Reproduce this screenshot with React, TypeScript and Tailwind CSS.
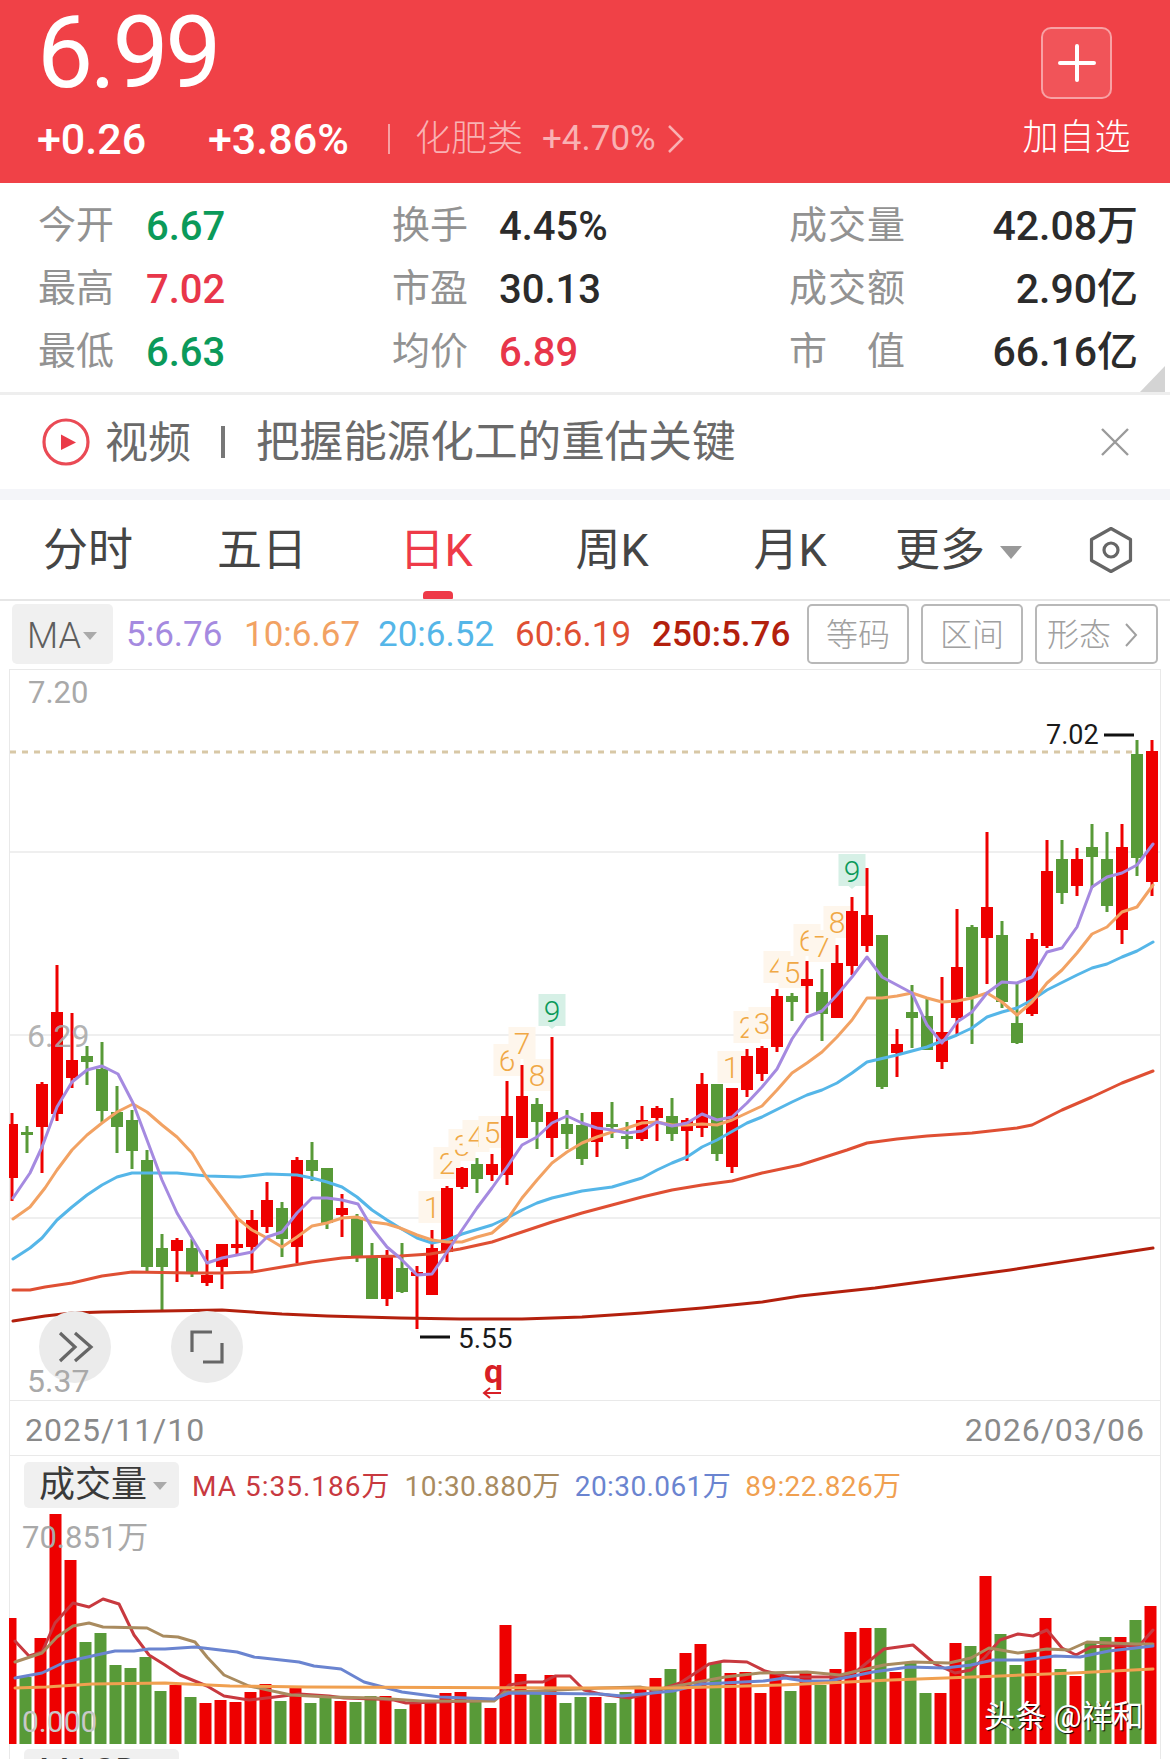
import React from "react";

type C = [number, number, number, number, "r" | "g"];
const candles: C[] = [
  [1113,1124,1178,1201,"r"],[1126,1132,1135,1153,"g"],[1082,1084,1127,1173,"r"],[965,1012,1114,1121,"r"],[1013,1060,1078,1088,"r"],
  [1046,1056,1062,1085,"g"],[1042,1069,1111,1122,"g"],[1086,1112,1127,1153,"g"],[1110,1120,1151,1169,"g"],[1150,1160,1267,1271,"g"],
  [1234,1248,1267,1310,"g"],[1238,1240,1251,1282,"r"],[1239,1248,1272,1277,"g"],[1250,1275,1283,1286,"r"],[1244,1244,1267,1289,"r"],
  [1219,1244,1248,1255,"r"],[1210,1220,1247,1273,"r"],[1182,1200,1227,1233,"r"],[1202,1208,1239,1257,"g"],[1157,1160,1247,1263,"r"],
  [1142,1160,1171,1181,"g"],[1168,1168,1223,1229,"g"],[1194,1208,1215,1237,"r"],[1214,1217,1257,1262,"g"],[1243,1257,1299,1299,"g"],
  [1250,1256,1299,1306,"r"],[1243,1268,1292,1293,"g"],[1266,1272,1276,1329,"r"],[1230,1248,1295,1295,"r"],[1186,1188,1252,1262,"r"],
  [1167,1168,1187,1189,"r"],[1158,1164,1179,1193,"g"],[1154,1164,1175,1181,"r"],[1081,1116,1175,1185,"r"],[1065,1096,1138,1138,"r"],
  [1098,1104,1122,1149,"g"],[1037,1112,1138,1157,"r"],[1110,1124,1134,1149,"g"],[1113,1125,1159,1165,"g"],[1112,1112,1142,1157,"r"],
  [1102,1124,1127,1138,"g"],[1122,1136,1139,1149,"g"],[1106,1120,1139,1141,"r"],[1106,1108,1118,1141,"r"],[1098,1116,1134,1141,"g"],
  [1118,1120,1131,1161,"r"],[1073,1084,1128,1137,"r"],[1084,1084,1154,1161,"g"],[1088,1088,1167,1173,"r"],[1049,1056,1090,1097,"r"],
  [1046,1048,1074,1081,"r"],[989,996,1047,1052,"r"],[993,996,1002,1021,"g"],[961,979,986,1013,"r"],[969,992,1014,1041,"g"],
  [945,963,1018,1018,"r"],[897,911,966,975,"r"],[868,915,946,952,"r"],[935,935,1087,1089,"g"],[1029,1044,1053,1077,"r"],
  [985,1012,1018,1048,"g"],[998,1016,1050,1050,"g"],[977,1032,1062,1069,"r"],[909,967,1018,1036,"r"],[925,927,997,1044,"g"],
  [832,907,938,984,"r"],[921,935,1002,1008,"g"],[983,1023,1043,1044,"g"],[933,939,1014,1016,"r"],[840,871,946,948,"r"],
  [840,859,893,904,"g"],[848,859,886,896,"r"],[824,847,857,888,"g"],[832,859,906,912,"g"],[824,847,930,944,"r"],
  [740,754,858,876,"g"],[740,751,882,896,"r"],
];

const ma5 = "13,1198 30,1173 42,1147 57,1107 72,1082 87,1070 102,1066 118,1074 133,1103 147,1140 162,1180 177,1213 192,1238 207,1263 222,1258 237,1255 252,1252 267,1237 282,1232 297,1213 312,1198 327,1198 342,1200 358,1204 372,1228 387,1247 400,1258 417,1275 432,1274 447,1252 462,1230 477,1208 492,1188 507,1167 522,1145 537,1137 552,1123 567,1116 582,1123 597,1128 612,1130 627,1133 642,1131 657,1122 672,1126 687,1123 702,1114 717,1120 732,1117 747,1103 762,1087 777,1069 792,1039 807,1017 822,1011 837,995 852,977 867,957 882,977 897,985 912,993 927,1025 942,1043 957,1022 972,1012 987,993 1002,982 1017,983 1032,977 1047,952 1062,948 1077,927 1092,887 1107,877 1122,873 1137,865 1153,844";
const ma10 = "13,1219 30,1207 45,1188 57,1170 72,1150 87,1135 102,1123 117,1112 133,1104 147,1112 162,1125 177,1137 192,1153 207,1178 222,1198 237,1218 252,1230 267,1238 282,1247 297,1237 312,1226 327,1223 342,1218 357,1217 372,1222 387,1224 400,1228 417,1235 432,1240 447,1242 462,1242 477,1237 492,1233 507,1220 522,1198 537,1180 552,1163 567,1152 582,1143 597,1137 612,1132 627,1128 642,1123 657,1122 672,1125 687,1125 702,1124 717,1125 732,1120 747,1113 762,1106 777,1090 792,1073 807,1063 822,1052 837,1037 852,1020 867,998 882,998 897,996 912,993 927,998 942,1002 957,1001 972,998 987,993 1002,1002 1017,1015 1032,1002 1047,983 1062,970 1077,953 1092,934 1107,927 1122,912 1137,907 1153,885";
const ma20 = "13,1259 30,1248 42,1238 57,1220 72,1207 87,1195 102,1185 117,1177 132,1173 147,1173 177,1173 207,1176 240,1177 267,1174 297,1175 312,1178 327,1182 342,1187 357,1197 372,1210 387,1220 400,1228 417,1238 432,1243 447,1240 462,1234 492,1225 507,1218 522,1210 537,1203 552,1198 582,1191 612,1187 642,1178 657,1170 672,1163 687,1157 702,1147 717,1140 747,1123 762,1117 792,1102 807,1095 822,1090 837,1083 852,1073 867,1062 897,1055 927,1047 957,1035 972,1028 987,1017 1002,1012 1017,1008 1032,1000 1047,990 1077,975 1092,968 1107,964 1122,957 1137,951 1153,942";
const ma60 = "13,1290 30,1290 45,1287 72,1283 102,1276 132,1272 192,1273 222,1273 252,1272 282,1267 312,1262 342,1258 357,1257 400,1256 430,1254 460,1249 492,1242 522,1232 552,1222 582,1213 612,1205 642,1197 672,1190 702,1185 732,1181 762,1173 800,1165 822,1158 847,1150 867,1143 897,1139 927,1136 972,1133 1017,1128 1032,1125 1062,1110 1092,1097 1122,1083 1153,1071";
const ma250 = "13,1321 45,1316 72,1313 102,1312 162,1311 222,1310 252,1312 282,1314 327,1316 400,1318 460,1319 522,1319 582,1317 642,1313 702,1308 762,1302 800,1296 875,1288 1010,1270 1153,1248";

const marks: [string, number, number][] = [
  ["1",432,1207],["2",447,1163],["3",462,1145],["4",476,1136],["5",492,1132],["6",507,1060],["7",522,1043],["8",537,1075],
  ["1",731,1067],["2",747,1027],["3",762,1023],["4",777,967],["5",792,972],["6",807,940],["7",822,946],["8",837,922],
];
const nines: [number, number][] = [[552,1011],[852,871]];

const vols: [number, "r" | "g"][] = [
  [1618,"r"],[1677,"g"],[1638,"r"],[1514,"r"],[1560,"r"],[1642,"g"],[1633,"g"],[1665,"g"],[1668,"g"],[1657,"g"],
  [1691,"g"],[1685,"r"],[1697,"g"],[1703,"r"],[1700,"r"],[1702,"r"],[1692,"r"],[1684,"r"],[1701,"g"],[1686,"r"],
  [1703,"g"],[1698,"g"],[1701,"r"],[1702,"g"],[1696,"g"],[1696,"r"],[1709,"g"],[1702,"r"],[1702,"r"],[1693,"r"],
  [1692,"r"],[1701,"g"],[1708,"r"],[1625,"r"],[1674,"r"],[1693,"g"],[1675,"r"],[1703,"g"],[1697,"g"],[1697,"r"],
  [1703,"g"],[1692,"g"],[1688,"r"],[1678,"r"],[1669,"g"],[1653,"r"],[1644,"r"],[1663,"g"],[1673,"r"],[1672,"r"],
  [1693,"r"],[1673,"r"],[1691,"g"],[1673,"r"],[1685,"g"],[1669,"r"],[1632,"r"],[1628,"r"],[1628,"g"],[1672,"r"],
  [1663,"g"],[1693,"g"],[1693,"r"],[1643,"r"],[1646,"g"],[1576,"r"],[1634,"g"],[1665,"g"],[1652,"r"],[1618,"r"],
  [1669,"g"],[1676,"r"],[1642,"g"],[1637,"g"],[1637,"r"],[1620,"g"],[1606,"r"],
];

const v5 = "15,1641 29,1656 42,1652 55,1623 73,1603 89,1607 103,1599 119,1604 134,1635 149,1655 165,1665 180,1675 207,1686 224,1696 249,1700 275,1697 299,1694 329,1696 344,1698 375,1699 394,1700 406,1703 440,1702 494,1700 509,1685 528,1682 543,1682 555,1676 570,1676 584,1690 600,1694 629,1698 651,1693 680,1683 709,1664 724,1661 747,1662 765,1671 789,1677 840,1677 858,1670 884,1649 913,1645 935,1664 955,1673 971,1670 985,1657 1000,1640 1018,1634 1033,1636 1047,1630 1062,1648 1076,1655 1091,1647 1124,1645 1138,1647 1153,1630";
const v10 = "15,1662 42,1653 57,1637 73,1626 89,1623 103,1627 147,1628 163,1636 178,1637 195,1642 207,1657 224,1675 249,1686 291,1695 329,1697 375,1698 421,1701 494,1701 505,1692 536,1691 600,1688 640,1687 655,1690 725,1677 760,1673 807,1672 840,1675 884,1665 913,1662 949,1663 971,1658 989,1648 1018,1653 1047,1649 1069,1650 1087,1642 1135,1644 1153,1644";
const v20 = "15,1678 42,1673 65,1662 92,1656 115,1651 134,1651 149,1649 165,1649 180,1648 195,1647 237,1652 254,1657 299,1662 314,1666 341,1669 364,1682 402,1692 440,1697 494,1699 509,1693 600,1694 622,1696 673,1691 702,1684 764,1681 785,1678 804,1681 829,1681 873,1672 909,1667 945,1668 971,1665 993,1660 1025,1660 1055,1656 1080,1657 1109,1651 1153,1646";
const v89 = "15,1688 46,1687 92,1684 165,1683 230,1686 306,1687 600,1688 673,1688 782,1685 891,1680 1000,1676 1073,1673 1153,1669";

const RED = "#ee0000";
const GREEN = "#589a38";

function Line({ pts, color, w = 3 }: { pts: string; color: string; w?: number }) {
  return <polyline points={pts} fill="none" stroke={color} strokeWidth={w} strokeLinejoin="round" strokeLinecap="round" />;
}

function KChart() {
  return (
    <svg className="absolute -left-px top-0 h-[730px] w-[1152px]" viewBox="9 670 1152 730">
      {[852, 1035, 1218].map((y) => (
        <line key={y} x1="10" x2="1160" y1={y} y2={y} stroke="#efefef" strokeWidth="2" />
      ))}
      <line x1="10" x2="1137" y1="752" y2="752" stroke="#d8c8a6" strokeWidth="3" strokeDasharray="6 6" />
      {marks.map(([t, x, y], i) => (
        <g key={i}>
          <rect x={x - 13.5} y={y - 16} width="27" height="32" fill="#fef6ec" />
          <text x={x} y={y + 11} textAnchor="middle" fontSize="30" fontWeight="300" fill="#f0a845">{t}</text>
        </g>
      ))}
      {nines.map(([x, y]) => (
        <g key={x}>
          <path d={`M${x - 13.5} ${y - 17}h27v32h-10l-3.5 3l-3.5 -3h-10z`} fill="#d6f0e6" />
          <text x={x} y={y + 11} textAnchor="middle" fontSize="30" fontWeight="300" fill="#0b9a5a">9</text>
        </g>
      ))}
      {candles.map(([wt, bt, bb, wb, c], i) => {
        const x = 12 + 15 * i;
        const f = c === "r" ? RED : GREEN;
        return (
          <g key={i} fill={f}>
            <rect x={x - 1.5} y={wt} width="3" height={wb - wt} />
            <rect x={Math.max(x - 6, 9)} y={bt} width={x - 6 < 9 ? 9 : 12} height={Math.max(bb - bt, 2)} />
          </g>
        );
      })}
      <Line pts={ma250} color="#b3200d" />
      <Line pts={ma60} color="#df4f33" />
      <Line pts={ma20} color="#55b6e8" />
      <Line pts={ma10} color="#f2a263" />
      <Line pts={ma5} color="#a58ae0" />
      <circle cx="75" cy="1347" r="36" fill="#ebebeb" />
      <circle cx="207" cy="1347" r="36" fill="#ebebeb" />
      <path d="M60 1333L75 1347L60 1361M75 1333L91 1347L75 1361" fill="none" stroke="#666" strokeWidth="3.2" />
      <path d="M192 1352V1332H212M203 1362H222V1343" fill="none" stroke="#666" strokeWidth="3.2" />
      <path d="M1104 735H1134M420 1337H450" stroke="#111" strokeWidth="3" />
      <path d="M501 1393H484M490 1388L484 1393L490 1398" fill="none" stroke="#d81f26" strokeWidth="2" />
    </svg>
  );
}

function VolChart() {
  return (
    <svg className="absolute -left-px top-0 h-[293px] w-[1152px]" viewBox="9 1456 1152 293">
      {vols.map(([t, c], i) => {
        const x = 10.5 + 15 * i;
        const l = Math.max(x - 6, 9);
        return <rect key={i} x={l} y={t} width={x + 6 - l} height={1744 - t} fill={c === "r" ? RED : GREEN} />;
      })}
      <Line pts={v5} color="#c8393f" />
      <Line pts={v10} color="#a98b5f" />
      <Line pts={v20} color="#6a84d0" />
      <Line pts={v89} color="#f0a050" />
    </svg>
  );
}

function Stat({ label, value, color, w }: { label: React.ReactNode; value: string; color: string; w: string }) {
  return (
    <div className="flex items-center h-[63px]">
      <span className={`text-[38px] text-[#929292] shrink-0 ${w}`}>{label}</span>
      <span className={`text-[40px] font-medium mt-[3px] ${color}`}>{value}</span>
    </div>
  );
}

export default function App() {
  return (
    <div className="w-[1170px] h-[1759px] overflow-hidden bg-white font-['Roboto','Noto_Sans_CJK_SC',sans-serif]">
      {/* Header */}
      <div className="h-[183px] bg-[#f04147] text-white flex justify-between pl-[37px] pr-[40px]">
        <div className="flex flex-col">
          <div className="text-[100px] leading-[106px] h-[106px] tracking-[-3.5px]">6.99</div>
          <div className="flex items-center h-[40px] mt-[13px]">
            <span className="text-[43px] font-medium w-[171px]">+0.26</span>
            <span className="text-[43px] font-medium w-[180px]">+3.86%</span>
            <span className="w-[2px] h-[30px] bg-[#f7a0a3]" />
            <span className="text-[36px] font-light text-[#f9b1b3] ml-[25px]">化肥类</span>
            <span className="text-[35px] text-[#f9b1b3] ml-[19px]">+4.70%</span>
            <svg className="ml-[11px]" width="18" height="30" viewBox="0 0 18 30"><path d="M2 2L15 15L2 28" fill="none" stroke="#f9b1b3" strokeWidth="2.5" /></svg>
          </div>
        </div>
        <div className="flex flex-col items-center pt-[27px] w-[107px]">
          <div className="w-[71px] h-[72px] rounded-[10px] bg-white/10 border-2 border-white/45 flex items-center justify-center">
            <svg width="38" height="38" viewBox="0 0 38 38"><path d="M19 2V36M2 19H36" stroke="#fff" strokeWidth="4" strokeLinecap="round" /></svg>
          </div>
          <span className="text-[36px] font-light mt-[17px] leading-[44px] whitespace-nowrap">加自选</span>
        </div>
      </div>

      {/* Stats */}
      <div className="relative h-[212px] pt-[11px] pl-[38px] pr-[32px] border-b-[3px] border-[#eeeeee] grid grid-cols-[354px_397px_1fr]">
        <div>
          <Stat label="今开" value="6.67" color="text-[#0b9a5a]" w="w-[108px]" />
          <Stat label="最高" value="7.02" color="text-[#e8364a]" w="w-[108px]" />
          <Stat label="最低" value="6.63" color="text-[#0b9a5a]" w="w-[108px]" />
        </div>
        <div>
          <Stat label="换手" value="4.45%" color="text-[#2b2b2b]" w="w-[107px]" />
          <Stat label="市盈" value="30.13" color="text-[#2b2b2b]" w="w-[107px]" />
          <Stat label="均价" value="6.89" color="text-[#e8364a]" w="w-[107px]" />
        </div>
        <div>
          {[["成交量", "42.08万"], ["成交额", "2.90亿"], ["市\u3000值", "66.16亿"]].map(([l, v]) => (
            <div key={l} className="flex items-center justify-between h-[63px]">
              <span className="text-[38px] text-[#929292] tracking-[1px]">{l}</span>
              <span className="text-[41px] font-medium mt-[3px] text-[#2b2b2b]">{v}</span>
            </div>
          ))}
        </div>
        <div className="absolute right-[5px] bottom-0 w-0 h-0 border-l-[25px] border-l-transparent border-b-[26px] border-b-[#d4d4d4]" />
      </div>

      {/* Video strip */}
      <div className="h-[94px] flex items-center pl-[42px] pr-[40px] text-[43px] text-[#6a6a6a]">
        <svg width="48" height="48" viewBox="0 0 48 48" className="shrink-0">
          <circle cx="24" cy="24" r="22" fill="none" stroke="#ea4a55" strokeWidth="3.2" />
          <path d="M19 16.5V32L34 24.5Z" fill="#ea3a48" />
        </svg>
        <span className="ml-[15px] mt-[2px]">视频</span>
        <span className="w-[4px] h-[32px] bg-[#777777] ml-[30px]" />
        <span className="ml-[31px] mt-[2px] text-[43.6px]">把握能源化工的重估关键</span>
        <svg className="ml-auto" width="30" height="30" viewBox="0 0 30 30"><path d="M2 2L28 28M28 2L2 28" stroke="#9a9a9a" strokeWidth="2.4" /></svg>
      </div>
      <div className="h-[11px] bg-[#f4f5f9]" />

      {/* Tabs */}
      <div className="h-[101px] border-b-2 border-[#e6e6e6] flex items-center text-[45px] text-[#454545] pt-[3px]">
        <div className="w-[176px] text-center">分时</div>
        <div className="w-[172px] text-center">五日</div>
        <div className="relative w-[188px] h-full flex items-center justify-center text-[#ee3a48] font-normal pr-[12px]">
          日K
          <span className="absolute bottom-0 left-[75px] w-[30px] h-[8px] rounded-t-[4px] rounded-b-[1px] bg-[#ee3a48]" />
        </div>
        <div className="w-[152px] text-center">周K</div>
        <div className="w-[204px] text-center">月K</div>
        <div className="flex items-center pl-[3px]">
          更多
          <span className="ml-[15px] mt-[3px] w-0 h-0 border-x-[11px] border-x-transparent border-t-[13px] border-t-[#999999]" />
        </div>
        <svg className="ml-auto mr-[37px] -mt-[3px]" width="44" height="48" viewBox="0 0 44 48">
          <path d="M22 2.5L41.5 13.5V34.5L22 45.5L2.5 34.5V13.5Z" fill="none" stroke="#666666" strokeWidth="3.2" strokeLinejoin="round" />
          <circle cx="22" cy="24" r="7" fill="none" stroke="#666666" strokeWidth="3.2" />
        </svg>
      </div>

      {/* MA legend */}
      <div className="h-[68px] pt-[3px] flex items-start pl-[12px]">
        <div className="w-[101px] h-[60px] rounded-[5px] bg-[#f0f0f0] flex items-center pl-[15px] pt-[3px] text-[36px] font-light text-[#5e5e5e]">
          MA<span className="ml-[2px] w-0 h-0 border-x-[7px] border-x-transparent border-t-[8px] border-t-[#aaaaaa]" />
        </div>
        <div className="flex items-center h-[60px] pt-[3px] text-[35px] ml-[13px]">
          <span className="text-[#a58ae0] w-[118px]">5:6.76</span>
          <span className="text-[#f2a263] w-[134px]">10:6.67</span>
          <span className="text-[#55b6e8] w-[137px]">20:6.52</span>
          <span className="text-[#df4f33] w-[137px]">60:6.19</span>
          <span className="text-[#b3200d] font-medium">250:5.76</span>
        </div>
        <div className="ml-auto mr-[12px] flex gap-[12px] text-[32px] font-light text-[#a0a0a0]">
          <div className="w-[102px] h-[60px] rounded-[5px] border-2 border-[#b8b8b8] flex items-center justify-center pt-[2px]">等码</div>
          <div className="w-[102px] h-[60px] rounded-[5px] border-2 border-[#b8b8b8] flex items-center justify-center pt-[2px]">区间</div>
          <div className="w-[123px] h-[60px] rounded-[5px] border-2 border-[#b8b8b8] flex items-center pl-[10px] pt-[2px]">
            形态
            <svg className="ml-[13px]" width="14" height="26" viewBox="0 0 14 26"><path d="M2 2L12 13L2 24" fill="none" stroke="#a0a0a0" strokeWidth="2" /></svg>
          </div>
        </div>
      </div>

      {/* Frame */}
      <div className="mx-[9px] border-x border-t border-[#e9e9e9]">
        <div className="relative h-[730px]">
          <KChart />
          <span className="absolute left-[18px] top-[5px] text-[31px] leading-[36px] text-[#a9a9a9]">7.20</span>
          <span className="absolute left-[17px] top-[348px] text-[32px] leading-[36px] text-[#a9a9a9]/90">6.29</span>
          <span className="absolute left-[17px] top-[693px] text-[32px] leading-[36px] text-[#a9a9a9]">5.37</span>
          <span className="absolute left-[1036px] top-[47px] text-[27px] leading-[36px] text-[#1a1a1a]">7.02</span>
          <span className="absolute left-[448px] top-[651px] text-[28px] leading-[36px] text-[#1a1a1a]">5.55</span>
          <span className="absolute left-[474px] top-[688px] text-[34px] leading-[26px] font-bold text-[#d81f26]">q</span>
        </div>
        <div className="h-[56px] pt-[4px] border-y border-[#e9e9e9] flex items-center justify-between px-[15px] text-[32px] tracking-[1px] text-[#8a8a8a]">
          <span>2025/11/10</span>
          <span>2026/03/06</span>
        </div>
        <div className="relative h-[293px]">
          <VolChart />
          <div className="relative pt-[6px] pl-[14px] flex items-center">
            <div className="w-[155px] h-[46px] rounded-[5px] bg-[#f0f0f0] flex items-center pl-[15px] text-[36px] text-[#3a3a3a]">
              成交量
              <span className="ml-[6px] mt-[2px] w-0 h-0 border-x-[7px] border-x-transparent border-t-[8px] border-t-[#aaaaaa]" />
            </div>
            <div className="flex items-center text-[28px] tracking-[0.4px] mt-[3px] ml-[13px] gap-[14px] whitespace-nowrap">
              <span className="text-[#c8393f] tracking-[1px]">MA 5:35.186万</span>
              <span className="text-[#a98b5f]">10:30.880万</span>
              <span className="text-[#6a84d0]">20:30.061万</span>
              <span className="text-[#f0a050]">89:22.826万</span>
            </div>
          </div>
          <span className="absolute left-[12px] top-[64px] text-[31px] leading-[36px] text-[#a9a9a9]">70.851万</span>
          <span className="absolute left-[12px] top-[248px] text-[30px] leading-[36px] text-[#c8c8c8]">0.000</span>
          <span className="absolute left-[974px] top-[243px] text-[31px] leading-[36px] text-white [text-shadow:1px_1px_1px_#000]">头条 @祥和</span>
        </div>
        <div className="pl-[14px]">
          <div className="w-[155px] h-[46px] rounded-[5px] bg-[#f0f0f0] flex items-center pl-[15px] text-[35px] text-[#3a3a3a]">MACD</div>
        </div>
      </div>
    </div>
  );
}
